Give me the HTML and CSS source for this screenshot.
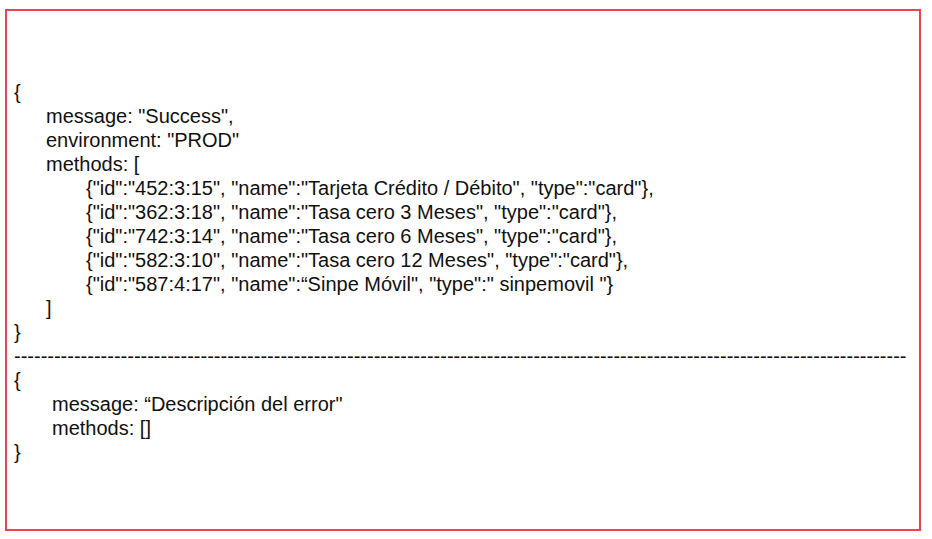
FILE: index.html
```html
<!DOCTYPE html>
<html lang="es">
<head>
<meta charset="utf-8">
<title>Respuesta</title>
<link rel="stylesheet" href="styles.css">
</head>
<body>
<div class="frame">
  <div class="code">
    <div class="line">{</div>
    <div class="line l1">message: "Success",</div>
    <div class="line l1">environment: "PROD"</div>
    <div class="line l1">methods: [</div>
    <div class="line l2">{"id":"452:3:15", "name":"Tarjeta Crédito / Débito", "type":"card"},</div>
    <div class="line l2">{"id":"362:3:18", "name":"Tasa cero 3 Meses", "type":"card"},</div>
    <div class="line l2">{"id":"742:3:14", "name":"Tasa cero 6 Meses", "type":"card"},</div>
    <div class="line l2">{"id":"582:3:10", "name":"Tasa cero 12 Meses", "type":"card"},</div>
    <div class="line l2">{"id":"587:4:17", "name":“Sinpe Móvil", "type":" sinpemovil "}</div>
    <div class="line l1">]</div>
    <div class="line">}</div>
    <div class="line dashes">--------------------------------------------------------------------------------------------------------------------------------------</div>
    <div class="line">{</div>
    <div class="line l1b">message: “Descripción del error"</div>
    <div class="line l1b">methods: []</div>
    <div class="line">}</div>
  </div>
</div>
</body>
</html>
```
FILE: styles.css
```css
html, body {
  margin: 0;
  padding: 0;
  background: #ffffff;
}

body {
  padding: 9px 0 0 5px;
}

.frame {
  width: 912px;
  height: 518px;
  border: 2px solid #ec4251;
  box-sizing: content-box;
}

.code {
  padding: 69px 0 0 7px;
  font-family: "Liberation Sans", Arial, sans-serif;
  font-size: 20px;
  line-height: 24px;
  color: #111111;
}

.line {
  white-space: pre;
}

.l1 {
  padding-left: 32px;
}

.l2 {
  padding-left: 72px;
}

.l1b {
  padding-left: 38px;
}

.dashes {
  overflow: hidden;
}
```
